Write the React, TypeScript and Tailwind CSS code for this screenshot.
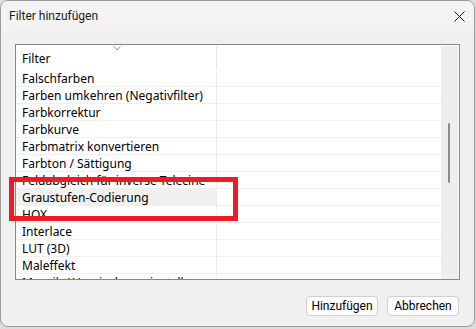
import React from "react";

const rows = [
  "Falschfarben",
  "Farben umkehren (Negativfilter)",
  "Farbkorrektur",
  "Farbkurve",
  "Farbmatrix konvertieren",
  "Farbton / Sättigung",
  "Feldabgleich für inverse Telecine",
  "Graustufen-Codierung",
  "HQX",
  "Interlace",
  "LUT (3D)",
  "Maleffekt",
  "Mosaik / Verpixelung einstellen",
];

const roboto = { fontFamily: 'Roboto, "Noto Sans", sans-serif' };

export default function App() {
  return (
    <div
      className="relative w-[476px] h-[329px] overflow-hidden bg-[#dcdcdc]"
      style={{ fontFamily: '"Noto Sans", "Open Sans", sans-serif' }}
    >
      <div className="w-[475px] h-[327px] rounded-[8px] border border-[#9a9a9a] bg-[#f0f0f0] flex flex-col overflow-hidden">
        <div className="h-[30px] shrink-0 bg-[#f3f3f3] flex items-center justify-between pl-[8px] pr-[9px]">
          <span className="text-[12px] text-[#1a1a1a] leading-none" style={roboto}>
            Filter hinzufügen
          </span>
          <svg width="11" height="11" viewBox="0 0 11 11" className="mt-[1px]">
            <path d="M0.5 0.5 L10.5 10.5 M10.5 0.5 L0.5 10.5" stroke="#1a1a1a" strokeWidth="1" />
          </svg>
        </div>
        <div className="flex-1 flex flex-col pl-[14px] pr-[15px] pt-[13px]">
          <div className="h-[236px] w-[445px] border border-[#828790] bg-white flex overflow-hidden">
            <div className="w-[425px] h-[234px] flex flex-col overflow-hidden">
              <div className="h-[25px] shrink-0 flex relative">
                <div className="w-[200px] flex items-center pl-[6px] text-[12px] leading-none text-black pt-[2px]">
                  Filter
                </div>
                <div className="w-[1px] my-[1px] bg-[#e5e5e5]" />
                <svg width="8" height="5" viewBox="0 0 8 5" className="absolute left-[97px] top-[1px]">
                  <path d="M0.5 0.5 L4 4 L7.5 0.5" stroke="#9a9a9a" fill="none" strokeWidth="1" />
                </svg>
              </div>
              {rows.map((r, i) => (
                <div key={r} className="h-[17px] shrink-0 flex border-b border-[#efefef]">
                  <div
                    className={
                      "w-[201px] flex items-center pl-[6px] pt-[2px] text-[12px] leading-none text-black whitespace-nowrap overflow-hidden border-r border-[#efefef] " +
                      (i === 7 ? "bg-[#f0f0f0]" : "")
                    }
                  >
                    {r}
                  </div>
                  <div className="flex-1" />
                </div>
              ))}
            </div>
            <div className="w-[17px] mt-[1px] bg-[#eeeeee] relative">
              <div className="absolute left-[7px] top-[77px] w-[2px] h-[60px] rounded-full bg-[#8b8b8b]" />
            </div>
          </div>
          <div className="flex justify-end gap-[9px] mt-[16px]" style={roboto}>
            <button className="w-[72px] h-[20px] rounded-[4px] border border-[#d0d0d0] bg-[#fdfdfd] text-[12px] text-black leading-none">
              Hinzufügen
            </button>
            <button className="w-[72px] h-[20px] rounded-[4px] border border-[#d0d0d0] bg-[#fdfdfd] text-[12px] text-black leading-none">
              Abbrechen
            </button>
          </div>
        </div>
      </div>
      <div className="absolute left-[9px] top-[177px] w-[229px] h-[44px] border-[5px] border-[#ed1c24]" />
    </div>
  );
}
